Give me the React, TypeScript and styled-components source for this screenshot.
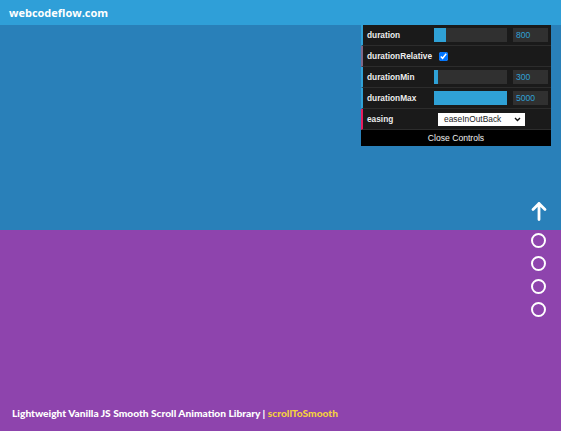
import React from "react";
import styled, { createGlobalStyle } from "styled-components";

const GlobalStyle = createGlobalStyle`
  html, body {
    margin: 0;
    padding: 0;
    overflow: hidden;
  }
  body {
    font-family: "Liberation Sans", Arial, sans-serif;
  }
`;

const Page = styled.div`
  position: relative;
  width: 561px;
  height: 431px;
  display: flex;
  flex-direction: column;
`;

const TopBar = styled.header`
  height: 25px;
  flex: none;
  background: #2f9fd8;
  display: flex;
  align-items: center;
  padding-left: 9px;
  font-family: "Open Sans", sans-serif;
  font-weight: 700;
  font-size: 11px;
  color: #ffffff;
`;

const Section = styled.section<{ $bg: string; $h: number }>`
  height: ${(p) => p.$h}px;
  flex: none;
  background: ${(p) => p.$bg};
  display: flex;
  flex-direction: column;
  justify-content: flex-end;
`;

const Credit = styled.p`
  margin: 0 0 12px 12px;
  font-family: "Lato", sans-serif;
  font-weight: 900;
  font-size: 10.2px;
  color: #ffffff;

  span {
    color: #f4d03f;
  }
`;

const Gui = styled.div`
  position: absolute;
  top: 25px;
  left: 361px;
  width: 190px;
  font-family: "Liberation Sans", Arial, sans-serif;
  font-size: 8.6px;
  color: #eeeeee;
  text-shadow: 0 -1px 0 #111;
`;

const Row = styled.div<{ $accent: string }>`
  height: 20px;
  display: flex;
  align-items: center;
  background: #1a1a1a;
  border-bottom: 1px solid #2c2c2c;
  border-left: 2px solid ${(p) => p.$accent};
  padding-left: 4px;
  padding-right: 3px;
`;

const Label = styled.span`
  width: 67px;
  flex: none;
  white-space: nowrap;
  font-weight: 700;
  font-size: 8.3px;
`;

const Track = styled.div`
  width: 73px;
  height: 14px;
  background: #303030;
  flex: none;
`;

const Fill = styled.div`
  height: 100%;
  background: #2fa1d6;
`;

const NumberBox = styled.div`
  margin-left: 6px;
  width: 35px;
  height: 14px;
  box-sizing: border-box;
  padding-left: 3px;
  background: #303030;
  color: #2fa1d6;
  display: flex;
  align-items: center;
  text-shadow: none;
`;

const Check = styled.input`
  margin: 0 0 0 5px;
  width: 9px;
  height: 9px;
  accent-color: #0075ff;
`;

const Select = styled.div`
  margin-left: 4px;
  width: 87px;
  height: 13px;
  box-sizing: border-box;
  background: #ffffff;
  color: #222;
  text-shadow: none;
  display: flex;
  align-items: center;
  justify-content: space-between;
  padding: 0 4px 0 6px;
  font-size: 8.4px;
`;

const CloseBar = styled.div`
  height: 16px;
  background: #000000;
  display: flex;
  align-items: center;
  justify-content: center;
`;

const Nav = styled.nav`
  position: absolute;
  left: 529px;
  top: 201px;
  width: 19px;
  display: flex;
  flex-direction: column;
  align-items: center;
  gap: 8px;

  svg {
    margin-bottom: 4px;
  }
`;

const Dot = styled.div`
  width: 15px;
  height: 15px;
  box-sizing: border-box;
  border: 2.5px solid #ffffff;
  border-radius: 50%;
`;

const MAX = 5000;

const sliders = [
  { name: "duration", value: 800 },
  { name: "durationMin", value: 300 },
  { name: "durationMax", value: 5000 },
];

function SliderRow({ name, value }: { name: string; value: number }) {
  return (
    <Row $accent="#2fa1d6">
      <Label>{name}</Label>
      <Track>
        <Fill style={{ width: `${(value / MAX) * 100}%` }} />
      </Track>
      <NumberBox>{value}</NumberBox>
    </Row>
  );
}

export default function App() {
  return (
    <>
      <GlobalStyle />
      <Page>
        <TopBar>webcodeflow.com</TopBar>
        <Section $bg="#2980b9" $h={205} />
        <Section $bg="#8e44ad" $h={201}>
          <Credit>
            Lightweight Vanilla JS Smooth Scroll Animation Library | <span>scrollToSmooth</span>
          </Credit>
        </Section>

        <Gui>
          <SliderRow {...sliders[0]} />
          <Row $accent="#806787">
            <Label>durationRelative</Label>
            <Check type="checkbox" defaultChecked />
          </Row>
          <SliderRow {...sliders[1]} />
          <SliderRow {...sliders[2]} />
          <Row $accent="#e61d5f">
            <Label>easing</Label>
            <Select>
              <span>easeInOutBack</span>
              <svg width="7" height="5" viewBox="0 0 7 5">
                <path d="M1 1l2.5 2.5L6 1" fill="none" stroke="#111" strokeWidth="1.4" />
              </svg>
            </Select>
          </Row>
          <CloseBar>Close Controls</CloseBar>
        </Gui>

        <Nav>
          <svg width="16" height="20" viewBox="0 0 16 20">
            <path
              d="M8 18.5V2.5M2 8.5l6-6 6 6"
              fill="none"
              stroke="#fff"
              strokeWidth="2.8"
              strokeLinecap="round"
              strokeLinejoin="round"
            />
          </svg>
          <Dot />
          <Dot />
          <Dot />
          <Dot />
        </Nav>
      </Page>
    </>
  );
}
